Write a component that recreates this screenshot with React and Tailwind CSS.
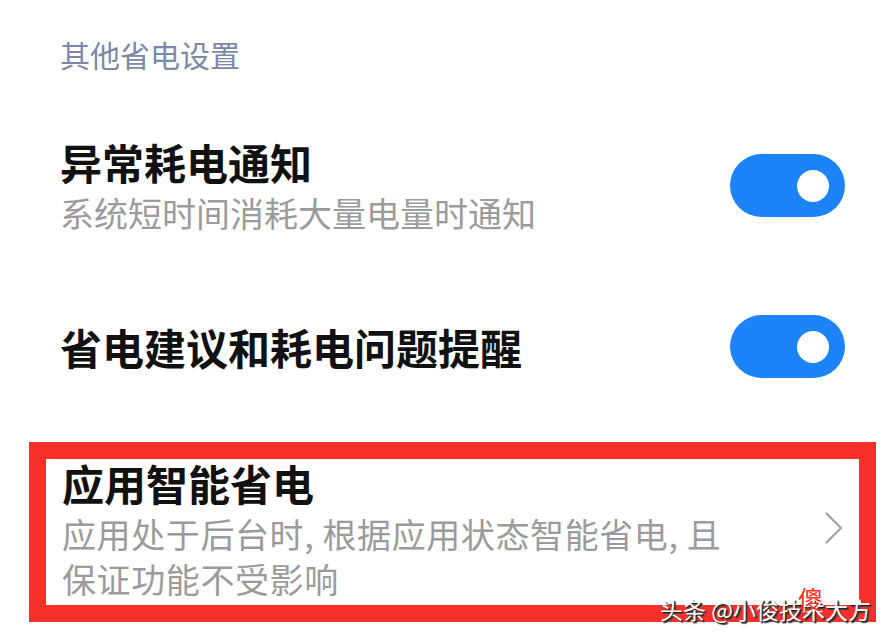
const FONT = "font-['Noto_Sans_CJK_SC','Noto_Sans',sans-serif]"

function Toggle() {
  return (
    <div className="flex h-[63px] w-[115px] shrink-0 items-center justify-end rounded-full bg-[#1c84f8] pr-[16px]">
      <span className="h-[32px] w-[32px] rounded-full bg-white" />
    </div>
  )
}

function Chevron() {
  return (
    <svg width="18" height="32" viewBox="0 0 18 32" fill="none" className="shrink-0">
      <path d="M1.5 1.5 L16 16 L1.5 30.5" stroke="#a3a3a3" strokeWidth="2.2" strokeLinecap="round" strokeLinejoin="round" />
    </svg>
  )
}

export default function App() {
  return (
    <div className={`relative h-[638px] w-[885px] overflow-hidden bg-white ${FONT}`}>
      {/* ── Section header ───────────────────────────── */}
      <div className="pl-[60px] pt-[34px] text-[30px] leading-[40px] text-[#7d87a8]">
        其他省电设置
      </div>

      {/* ── Abnormal drain notice ────────────────────── */}
      <div className="mt-[62px] flex items-center justify-between pl-[60px] pr-[40px]">
        <div>
          <p className="text-[42px] font-bold leading-[52px] text-[#111]">异常耗电通知</p>
          <p className="mt-[3px] text-[34px] leading-[44px] text-[#9b9b9b]">系统短时间消耗大量电量时通知</p>
        </div>
        <Toggle />
      </div>

      {/* ── Suggestions ──────────────────────────────── */}
      <div className="mt-[80px] flex items-center justify-between pl-[60px] pr-[40px]">
        <p className="text-[42px] font-bold leading-[52px] text-[#111]">省电建议和耗电问题提醒</p>
        <Toggle />
      </div>

      {/* ── Highlighted: smart app saving ────────────── */}
      <div className="ml-[29px] mt-[64px] w-[847px] border-[17px] border-[#f8302b]">
        <div className="flex items-center justify-between pl-[16px] pr-[16px]">
          <div>
            <p className="text-[42px] font-bold leading-[48px] text-[#111]">应用智能省电</p>
            <p className="mt-[4px] pb-[4px] text-[34px] leading-[45px] tracking-[0.6px] text-[#9b9b9b]">
              应用处于后台时, 根据应用状态智能省电, 且<br />保证功能不受影响
            </p>
          </div>
          <div className="-mt-[8px]">
            <Chevron />
          </div>
        </div>
      </div>

      {/* ── Watermark ────────────────────────────────── */}
      <div className="absolute left-[660px] top-[594px] whitespace-nowrap text-[23px] leading-[30px] text-white [text-shadow:1px_1px_0_#222,2px_2px_1px_#444]">
        头条 @小俊技<span className="relative">术<span className="absolute -top-[9px] -left-[4px] text-[25px] text-[#f8302b] [text-shadow:1px_1px_0_#fff]">傻</span></span>大方
      </div>
    </div>
  )
}
